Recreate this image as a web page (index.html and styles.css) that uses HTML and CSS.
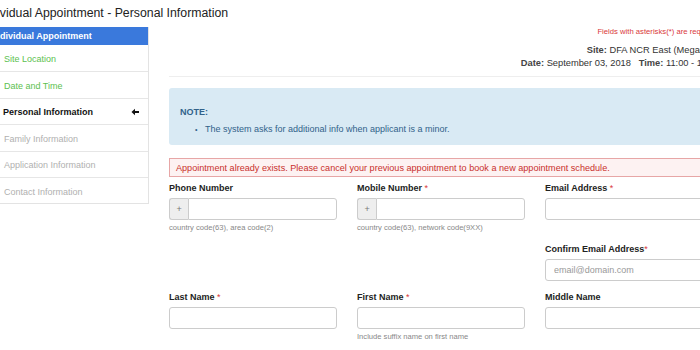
FILE: index.html
```html
<!DOCTYPE html>
<html lang="en">
    <head>
        <meta charset="UTF-8" />
        <title>Individual Appointment - Personal Information</title>
        <link rel="stylesheet" href="styles.css">
    </head>
    <body>
        <div class="page">
            <h1 class="page-title">Individual Appointment - Personal Information</h1>

            <div class="layout">
                <div class="steps">
                    <div class="steps-head">Individual Appointment</div>
                    <a class="step done" href="#">Site Location</a>
                    <a class="step done" href="#">Date and Time</a>
                    <div class="step current">
                        Personal Information
                        <svg class="arrow" width="8" height="8" viewBox="0 0 8 8">
                            <path d="M0.5 4 L4 0.8 V7.2 Z" fill="#111" />
                            <path d="M3 4 H8" stroke="#111" stroke-width="2" />
                        </svg>
                    </div>
                    <div class="step todo">Family Information</div>
                    <div class="step todo">Application Information</div>
                    <div class="step todo">Contact Information</div>
                </div>

                <div class="content">
                    <div class="summary">
                        <p class="required-note">Fields with asterisks(*) are required.</p>
                        <p><b>Site:</b> DFA NCR East (Megamall)</p>
                        <p><b>Date:</b> September 03, 2018 &nbsp; <b>Time:</b> 11:00 - 12:00</p>
                    </div>

                    <div class="note">
                        <h4>NOTE:</h4>
                        <ul>
                            <li>The system asks for additional info when applicant is a minor.</li>
                        </ul>
                    </div>

                    <div class="alert">
                        Appointment already exists. Please cancel your previous appointment to book a new appointment schedule.
                    </div>

                    <div class="form-grid">
                        <div class="field">
                            <label>Phone Number</label>
                            <div class="input-group">
                                <span class="addon">+</span>
                                <input type="text" />
                            </div>
                            <small>country code(63), area code(2)</small>
                        </div>
                        <div class="field">
                            <label>Mobile Number <span class="req">*</span></label>
                            <div class="input-group">
                                <span class="addon">+</span>
                                <input type="text" />
                            </div>
                            <small>country code(63), network code(9XX)</small>
                        </div>
                        <div class="field">
                            <label>Email Address <span class="req">*</span></label>
                            <input type="text" />
                        </div>

                        <div class="field"></div>
                        <div class="field"></div>
                        <div class="field">
                            <label>Confirm Email Address<span class="req">*</span></label>
                            <input type="text" placeholder="email@domain.com" />
                        </div>

                        <div class="field">
                            <label>Last Name <span class="req">*</span></label>
                            <input type="text" />
                        </div>
                        <div class="field">
                            <label>First Name <span class="req">*</span></label>
                            <input type="text" />
                            <small>Include suffix name on first name</small>
                        </div>
                        <div class="field">
                            <label>Middle Name</label>
                            <input type="text" />
                        </div>
                    </div>
                </div>
            </div>
        </div>
    </body>
</html>
```

FILE: styles.css
```css
body {
    margin: 0;
    background: #fff;
    color: #333;
    font-family: "Liberation Sans", Arial, sans-serif;
    font-size: 9px;
    overflow: hidden;
}
.page {
    margin-left: -20px;
    width: 760px;
}
.page-title {
    margin: 0;
    padding-top: 5px;
    font-size: 12.3px;
    font-weight: normal;
    line-height: 17px;
    color: #222;
    height: 22px;
}

.layout {
    display: flex;
    gap: 20px;
    padding-left: 8px;
}

.steps {
    width: 159px;
    flex-shrink: 0;
    border: 1px solid #e3e3e3;
    border-top: none;
    align-self: flex-start;
}
.steps-head {
    background: #3a79dc;
    color: #fff;
    font-weight: bold;
    height: 18px;
    line-height: 18px;
    padding-left: 3px;
}
.step {
    box-sizing: border-box;
    display: flex;
    align-items: center;
    justify-content: space-between;
    height: 26.4px;
    padding: 2px 9px 0 15px;
    border-top: 1px solid #e6e6e6;
    text-decoration: none;
}
.steps-head + .step {
    border-top: none;
}
.step.done {
    color: #5cbf4f;
}
.step.current {
    color: #111;
    font-weight: bold;
    padding-left: 14px;
}
.step.todo {
    color: #b0b0b0;
}

.content {
    width: 551px;
}
.summary {
    text-align: right;
    padding: 0 0 6px 0;
    border-bottom: 1px solid #eee;
}
.summary p {
    margin: 0;
    font-size: 9.3px;
    line-height: 13px;
}
.summary b {
    color: #444;
}
.summary .required-note {
    color: #d9383a;
    font-size: 7.7px;
    line-height: 10px;
    padding-bottom: 7px;
}

.note {
    margin-top: 11px;
    background: #d9eaf4;
    border-radius: 3px;
    padding: 18px 10px 9px 11px;
    color: #31628a;
    line-height: 12px;
}
.note h4 {
    margin: 0 0 5px;
    font-size: 9px;
}
.note ul {
    margin: 0;
    padding-left: 25px;
    list-style: none;
}
.note li::before {
    content: "\2022";
    margin-left: -10px;
    width: 10px;
    display: inline-block;
    font-size: 7px;
}

.alert {
    margin-top: 13px;
    border: 1px solid #e7a6a6;
    background: #fdf2f2;
    color: #c9302c;
    font-size: 9.1px;
    padding: 0 6px;
    height: 17px;
    line-height: 18px;
}

.form-grid {
    margin-top: 5px;
    display: grid;
    grid-template-columns: 168px 168px 168px;
    column-gap: 20px;
    row-gap: 10px;
}
.field {
    display: flex;
    flex-direction: column;
}
.field label {
    font-weight: bold;
    color: #222;
    line-height: 12px;
    margin-bottom: 4px;
}
.req {
    color: #d9383a;
    font-weight: normal;
}
.field input {
    box-sizing: border-box;
    height: 22px;
    width: 100%;
    border: 1px solid #ccc;
    border-radius: 3px;
    font-family: inherit;
    font-size: 9px;
    padding: 0 8px;
    outline: none;
}
.field input::placeholder {
    color: #999;
}
.field small {
    margin-top: 3px;
    font-size: 7.6px;
    line-height: 10px;
    color: #888;
}
.input-group {
    display: flex;
}
.addon {
    box-sizing: border-box;
    width: 22px;
    height: 22px;
    line-height: 20px;
    text-align: center;
    background: #eee;
    border: 1px solid #ccc;
    border-right: none;
    border-radius: 3px 0 0 3px;
    color: #777;
}
.input-group input {
    border-radius: 0 3px 3px 0;
}
```
